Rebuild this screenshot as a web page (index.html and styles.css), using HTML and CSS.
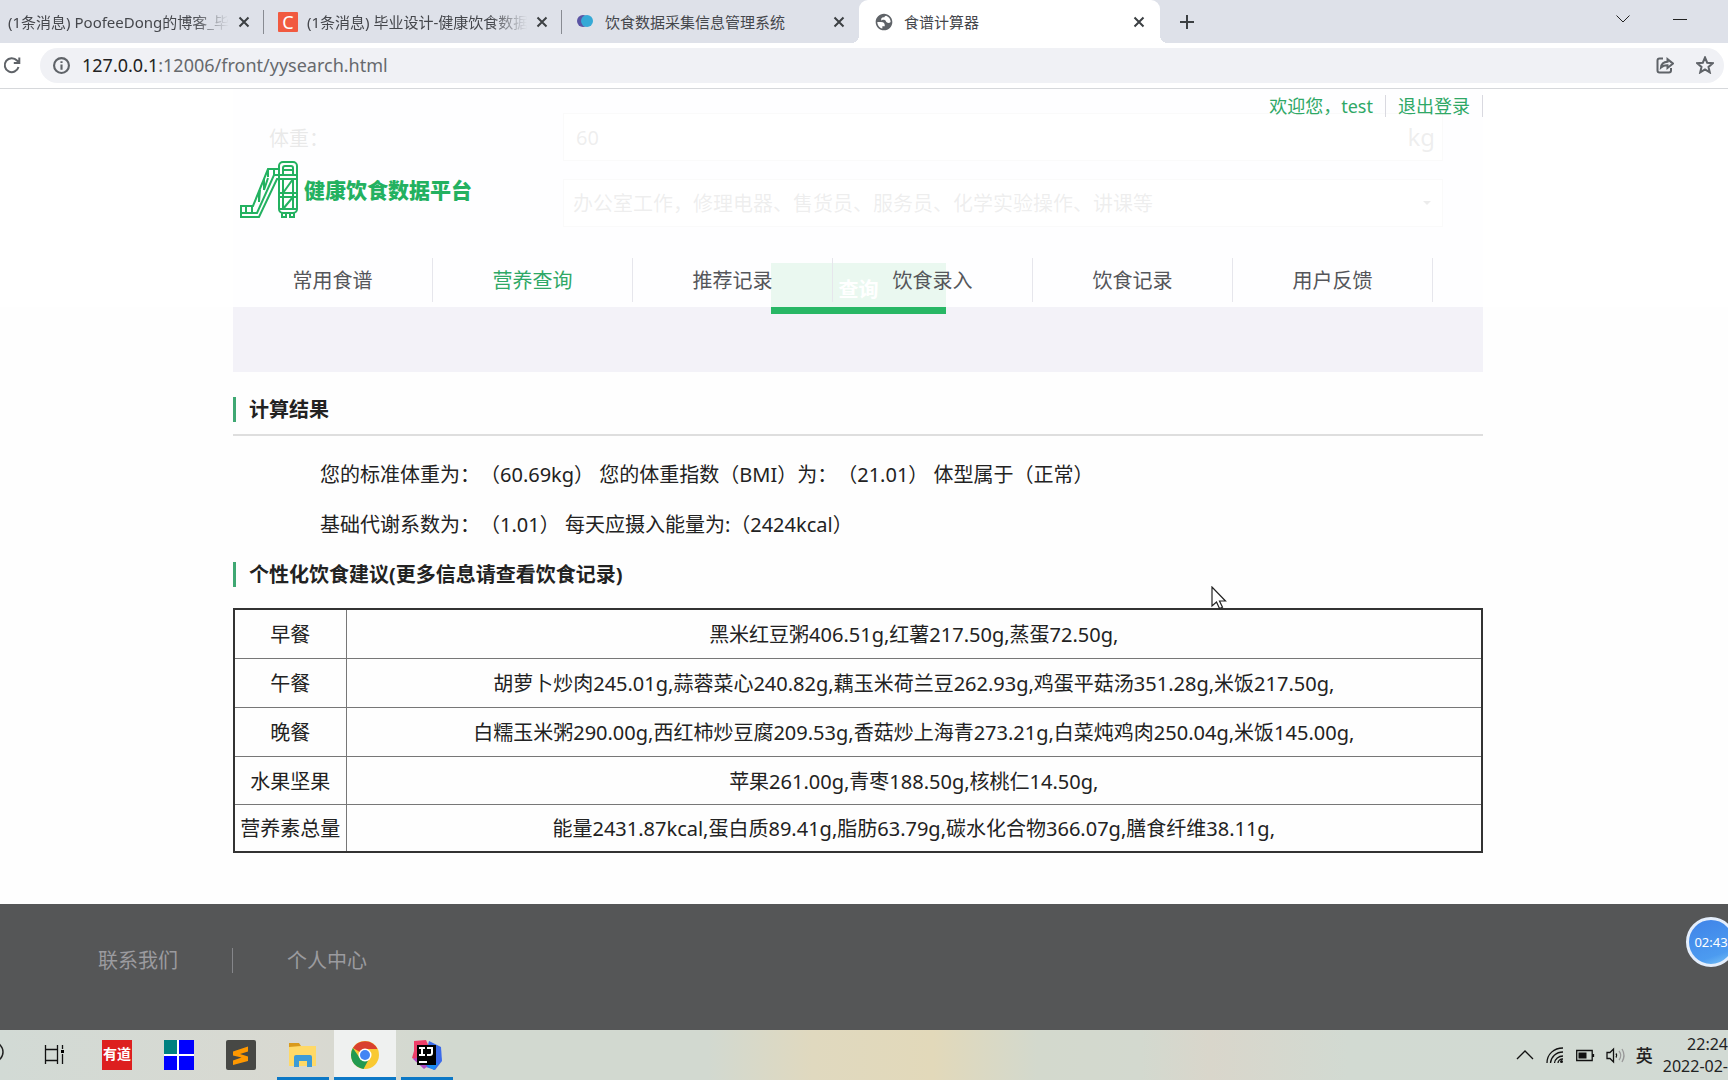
FILE: index.html
```html
<!DOCTYPE html>
<html lang="zh-CN">
<head>
<meta charset="utf-8">
<title>食谱计算器</title>
<link rel="stylesheet" href="styles.css">
</head>
<body>
<div class="tabs">
  <div class="tab tab-first"><span class="tab-title fade">(1条消息) PoofeeDong的博客_毕</span><button class="close" aria-label="关闭"><svg viewBox="0 0 12 12"><path d="M1.5 1.5l9 9M10.5 1.5l-9 9"/></svg></button></div>
  <div class="tab"><span class="fav fav-c">C</span><span class="tab-title fade">(1条消息) 毕业设计-健康饮食数据</span><button class="close" aria-label="关闭"><svg viewBox="0 0 12 12"><path d="M1.5 1.5l9 9M10.5 1.5l-9 9"/></svg></button></div>
  <div class="tab tab-third"><svg class="fav" viewBox="0 0 20 20"><circle cx="7" cy="9" r="6" fill="#5a54a4"/><circle cx="11" cy="9" r="6" fill="#35a9d6"/></svg><span class="tab-title">饮食数据采集信息管理系统</span><button class="close" aria-label="关闭"><svg viewBox="0 0 12 12"><path d="M1.5 1.5l9 9M10.5 1.5l-9 9"/></svg></button></div>
  <div class="tab active"><svg class="fav" viewBox="0 0 24 24"><path fill="#5f6368" d="M12 2C6.48 2 2 6.48 2 12s4.48 10 10 10 10-4.480 10-10S17.520 2 12 2zM4 12h4.400c3.400.020 4.900 1.730 4.500 5.100H10v2.650C6.500 19 4 15.800 4 12zm16 0c-1.500 1.500-3.500 1.300-4.800.3-1-.9-.9-2.800-3.100-3.100-1.500-.1-2.600.1-3.200 1.300-1-2.600.3-4.400 3.600-4.100.2-1.200.8-1.800 2-2C17.700 5.400 20 8.400 20 12z"/></svg><span class="tab-title">食谱计算器</span><button class="close" aria-label="关闭"><svg viewBox="0 0 12 12"><path d="M1.5 1.5l9 9M10.5 1.5l-9 9"/></svg></button></div>
  <button class="plus" aria-label="新标签页"><svg viewBox="0 0 14 14"><path d="M7 0v14M0 7h14"/></svg></button>
  <div class="window-buttons">
    <button aria-label="搜索标签页"><svg viewBox="0 0 14 14"><path d="M.5 3.500l6.500 6.500 6.500-6.500"/></svg></button>
    <button aria-label="最小化"><svg viewBox="0 0 14 14"><path d="M0 7.500h14"/></svg></button>
  </div>
</div>
<div class="toolbar">
  <button class="reload" aria-label="重新加载"><svg viewBox="0 0 18 18"><path d="M15.500 11A7 7 0 1 1 14 4.500L16 6.500M16.300 1.500v5.500h-5.500" fill="none" stroke="#5f6368" stroke-width="2"/></svg></button>
  <div class="address">
    <svg class="info" viewBox="0 0 16 16"><circle cx="8" cy="8" r="7" /><path d="M8 7v5M8 4v1.700"/></svg>
    <span class="url"><b>127.0.0.1</b>:12006/front/yysearch.html</span>
    <button aria-label="分享"><svg viewBox="0 0 18 18"><path d="M7 2.500H3.500Q1.500 2.500 1.500 4.500v10q0 2 2 2H13q2 0 2-2V12M5 11.500c.4-3.700 2.500-5.500 6.500-5.700V3.200L17 7.600l-5.500 4.400V9.300C8.500 9.200 6.700 10 5 11.500z"/></svg></button>
    <button aria-label="收藏"><svg viewBox="0 0 18 18"><path d="M9 1.500l2.200 5.200 5.600.5-4.300 3.700 1.300 5.500L9 13.500l-4.800 2.900 1.300-5.500-4.300-3.700 5.600-.5z"/></svg></button>
  </div>
</div>

<div class="page">
  <header class="site-header">
    <div class="container">
      <div class="user-bar"><a href="#">欢迎您，test</a><a href="#">退出登录</a></div>
      <a class="logo" href="#">
        <svg viewBox="0 0 58 58"><g fill="none" stroke="#23b160" stroke-width="2"><path d="M39 9h-11L13 46H1v11h18l18-38h2"/><path d="M1 53h16l17-38h5M6 46v7M12 46v7M28 9v8M34 9v6M24 19v11M19 31v11M28 18l-4 12M20 30l-1 12"/><rect x="39" y="2" width="18" height="51" rx="4"/><path d="M43 15V8q0-2 2-2h6q2 0 2 2v7M43 10h10M39 15h18M39 19h18M39 33h18M39 37h18M39 49h18M43 19v30M53 19v30M43 33l10-14M43 49l10-12M42 53v4h4v-4M50 53v4h4v-4"/></g></svg>
        <span>健康饮食数据平台</span>
      </a>
      <nav class="nav">
        <a href="#">常用食谱</a><a href="#" class="current">营养查询</a><a href="#">推荐记录</a><a href="#">饮食录入</a><a href="#">饮食记录</a><a href="#">用户反馈</a>
      </nav>
    </div>
  </header>
  <main class="container">
    <form class="calc">
      <div class="field"><label for="weight">体重：</label><div class="control"><input id="weight" type="text" value="60"><span class="unit">kg</span></div></div>
      <div class="field"><label for="work" aria-label="劳动强度"></label><div class="control"><select id="work"><option>办公室工作，修理电器、售货员、服务员、化学实验操作、讲课等</option></select><span class="caret"></span></div></div>
      <button class="submit" type="button">查询</button>
    </form>
    <section>
      <h2>计算结果</h2>
      <div class="result">
        <p>您的标准体重为：（60.69kg） 您的体重指数（BMI）为：（21.01） 体型属于（正常）</p>
        <p>基础代谢系数为：（1.01） 每天应摄入能量为:（2424kcal）</p>
      </div>
    </section>
    <section>
      <h2>个性化饮食建议(更多信息请查看饮食记录)</h2>
      <table>
        <tr><th scope="row">早餐</th><td>黑米红豆粥406.51g,红薯217.50g,蒸蛋72.50g,</td></tr>
        <tr><th scope="row">午餐</th><td>胡萝卜炒肉245.01g,蒜蓉菜心240.82g,藕玉米荷兰豆262.93g,鸡蛋平菇汤351.28g,米饭217.50g,</td></tr>
        <tr><th scope="row">晚餐</th><td>白糯玉米粥290.00g,西红柿炒豆腐209.53g,香菇炒上海青273.21g,白菜炖鸡肉250.04g,米饭145.00g,</td></tr>
        <tr><th scope="row">水果坚果</th><td>苹果261.00g,青枣188.50g,核桃仁14.50g,</td></tr>
        <tr><th scope="row">营养素总量</th><td>能量2431.87kcal,蛋白质89.41g,脂肪63.79g,碳水化合物366.07g,膳食纤维38.11g,</td></tr>
      </table>
    </section>
  </main>
  <svg class="cursor" viewBox="0 0 16 24"><path d="M1 1v19l4.500-4 3 6.500 3-1.300-3-6.200H14.500z" fill="#fff" stroke="#222" stroke-width="1.200"/></svg>
</div>

<footer class="site-footer">
  <a href="#">联系我们</a><a href="#">个人中心</a>
  <div class="recorder">02:43</div>
</footer>

<div class="taskbar">
  <div class="apps">
    <button class="app search" aria-label="搜索"><svg viewBox="0 0 30 30"><circle cx="15" cy="12" r="10" fill="none" stroke="#222" stroke-width="1.500"/></svg></button>
    <button class="app" aria-label="任务视图"><svg viewBox="0 0 30 30"><path d="M5.500 5v4.500h12V5M5.500 24v-3.500h12V24M5.500 9.500h12v11h-12zM22.500 5v4M22.500 14v10" fill="none" stroke="#111" stroke-width="1.300"/><path d="M21 10h3v3h-3z"/></svg></button>
    <button class="app" aria-label="有道"><span class="youdao">有道</span></button>
    <button class="app" aria-label="窗口"><svg viewBox="0 0 30 30"><path fill="#fff" d="M0 0h30v30H0z"/><path fill="#008080" d="M0 0h13v14H0z"/><path fill="#00f" d="M15 0h15v14H15zM0 16h13v14H0zM15 16h15v14H15z"/></svg></button>
    <button class="app" aria-label="编辑器"><svg viewBox="0 0 30 30"><rect width="30" height="30" rx="2" fill="#474845"/><path fill="#ff9800" d="M7 11.500L22 6.500v5l-8 2.500 8 2.500v4.500L7 25v-4.500l8.500-3L7 15.500z"/></svg></button>
    <button class="app open" aria-label="文件"><svg viewBox="0 0 30 30"><path fill="#d99a1c" d="M1 3h10l2 3v3H1z"/><path fill="#ffd967" d="M1 7l12-1h15v20H1z"/><path fill="#3d9bd8" d="M6 27V17q0-2 2-2h14q2 0 2 2v10h-5v-6h-8v6z"/></svg></button>
    <button class="app open focus" aria-label="浏览器"><svg viewBox="0 0 30 30"><circle cx="15" cy="15" r="14" fill="#f9c932"/><path fill="#d9402f" d="M15 15L2.900 8A14 14 0 0 1 27.500 9H15z"/><path fill="#229a50" d="M2.900 8A14 14 0 0 0 13.500 29l6-11L9.800 18z"/><circle cx="15" cy="15" r="6.500" fill="#fff"/><circle cx="15" cy="15" r="5" fill="#4285f4"/></svg></button>
    <button class="app open" aria-label="IntelliJ"><svg viewBox="0 0 30 30"><path fill="#ee3f69" d="M2 1l12-1 6 14-12 8-8-4 2-7z"/><path fill="#3b6bea" d="M17 1l12 6 1 14-7 9-12-4z"/><path fill="#b14cc4" d="M1 19l8-3 7 10-4 3z"/><path fill="#1c8bf0" d="M10 23h16l-4 7z"/><path d="M5 5h19v20H5z"/><path d="M7 8h6M10 8v7M7 15h6M15 8h5v5q0 2-2 2h-3" stroke="#fff" stroke-width="2" fill="none"/><path fill="#fff" d="M7 21h8v2H7z"/></svg></button>
  </div>
  <div class="tray">
    <svg viewBox="0 0 18 18"><path d="M1 13l8-8 8 8"/></svg>
    <svg viewBox="0 0 18 18"><path d="M1 17C1 8 8 2 17 2M4.500 17C5 11 10 6 17 6M8.500 17c.5-4 4-7 8.500-7M12 17c0-2 2-4 5-4"/><circle cx="15.500" cy="15.500" r="1.500" fill="#111" stroke="none"/></svg>
    <svg viewBox="0 0 18 18"><path d="M.7 4.500h15.500v10H.7zM17.500 8v3"/><path fill="#111" stroke="none" d="M2.500 6.500h8v6h-8z"/></svg>
    <svg viewBox="0 0 18 18"><path d="M1 6.500h3L7.500 3v13L4 12.500H1zM10 7.500q1.500 2 0 4"/><path stroke="#999" d="M13 5q3.500 4.500 0 9M16 3q4 6.500 0 13"/></svg>
    <span class="ime">英</span>
    <div class="clock">22:24<br>2022-02-</div>
  </div>
</div>
</body>
</html>
```
FILE: styles.css
```css
* { box-sizing: border-box; }
body {
  margin: 0;
  min-height: 100vh;
  display: flex;
  flex-direction: column;
  overflow-x: hidden;
  background: #fff;
  color: #222;
  font-family: "Noto Sans", "Noto Sans CJK SC", sans-serif;
  font-size: 20px;
  text-spacing-trim: space-all;
}
button { border: 0; padding: 0; background: none; font: inherit; display: block; }
a { color: inherit; text-decoration: none; }
svg { display: block; }

/* browser chrome */
.tabs { display: flex; align-items: stretch; height: 43px; background: #dee1e9; font-size: 15px; color: #45474c; }
.tab { display: flex; align-items: center; position: relative; width: 298px; padding: 0 14px; gap: 9px; }
.tab:nth-child(-n+2)::after { content: ""; position: absolute; right: 0; top: 10px; width: 1px; height: 24px; background: #888b92; }
.tab-first { width: 264px; padding-left: 8px; }
.tab-third { width: 297px; }
.tab-title { flex: 1; overflow: hidden; white-space: nowrap; }
.fade { -webkit-mask-image: linear-gradient(to left, transparent, #000 36px); mask-image: linear-gradient(to left, transparent, #000 36px); }
.fav { flex: none; width: 20px; height: 20px; }
.fav-c { background: #f15a40; color: #fff; font-size: 18px; line-height: 20px; text-align: center; border-radius: 1px; }
.close svg { width: 12px; height: 12px; stroke: #3c4043; stroke-width: 2; }
.active { width: 301px; gap: 10px; padding: 0 15px; background: #fff; border-radius: 9px 9px 0 0; }
.active::before, .active::after { content: ""; position: absolute; bottom: 0; width: 8px; height: 8px; }
.active::before { left: -8px; background: radial-gradient(circle at 0 0, transparent 8px, #fff 8px); }
.active::after { right: -8px; background: radial-gradient(circle at 100% 0, transparent 8px, #fff 8px); }
.plus { margin-left: 20px; }
.plus svg { width: 14px; height: 14px; stroke: #3c4043; stroke-width: 2; }
.window-buttons { margin-left: auto; display: flex; align-items: center; gap: 43px; padding: 0 41px 6px 0; }
.window-buttons svg { width: 14px; height: 14px; fill: none; stroke: #222; }
.toolbar { display: flex; align-items: center; gap: 19px; height: 46px; padding: 0 4px 1px 3px; border-bottom: 1px solid #d6d8db; }
.reload svg { width: 18px; height: 18px; }
.address { flex: 1; display: flex; align-items: center; gap: 22px; height: 35px; padding: 0 10px 0 13px; border-radius: 18px; background: #f0f1f5; }
.address svg { width: 18px; height: 18px; fill: none; stroke: #5f6368; stroke-width: 2; }
.address .info { width: 17px; height: 17px; margin-right: -10px; }
.url { flex: 1; font-size: 18px; line-height: 24px; color: #66696d; }
.url b { font-weight: 400; color: #222; }

/* page */
.page { position: relative; flex: 1; padding: 0 12px 50px 0; background: #fefefe; }
.container { width: 1250px; max-width: 100%; margin: 0 auto; }
.site-header { position: absolute; inset: 0 0 auto 0; z-index: 2; padding-right: 12px; background: rgba(255, 255, 255, .9); }
.user-bar { display: flex; justify-content: flex-end; padding-top: 6px; font-size: 18px; line-height: 22px; color: #2fa866; }
.user-bar a { padding: 0 12px; border-right: 1px solid #d9d9e0; }
.logo { display: flex; align-items: center; gap: 6px; height: 141px; padding: 36px 0 34px 7px; color: #23b160; font-size: 21px; font-weight: 900; }
.logo svg { width: 58px; height: 58px; }
.nav { display: flex; height: 49px; }
.nav a { width: 200px; height: 44px; line-height: 46px; text-align: center; border-right: 1px solid #e6e6ec; color: #55565a; }
.nav .current { color: #2fa866; }
.calc { display: flex; flex-direction: column; gap: 18px; height: 283px; padding: 24px 40px 0 36px; background: #f3f2f8; }
.field { display: grid; grid-template-columns: 294px 1fr; align-items: center; }
.control { position: relative; height: 48px; }
.control input, .control select { width: 100%; height: 48px; padding: 0 12px; border: 1px solid #ccc; background: #fff; color: #555; font: inherit; appearance: none; }
.control select { padding: 0 9px; }
.unit { position: absolute; right: 8px; top: 8px; font-size: 24px; line-height: 32px; color: #555; }
.caret { position: absolute; right: 12px; top: 22px; border: 4px solid transparent; border-top-color: #444; }
.submit { width: 175px; height: 51px; margin: 18px 0 0 502px; background: #28b765; color: #fff; font-weight: 700; }
h2 { display: flex; align-items: center; margin: 0; height: 25px; padding-left: 13px; border-left: 3px solid #3fa873; font-size: 20px; line-height: 25px; }
main section:first-of-type { padding-top: 25px; }
.result { margin-top: 12px; padding: 14px 0 12px 87px; border-top: 2px solid #dedede; line-height: 50px; }
.result p { margin: 0; }
table { width: 100%; margin-top: 21px; border-collapse: collapse; border: 2px solid #333; }
th, td { height: 49px; padding: 0; border: 1px solid #777; text-align: center; font-weight: 400; }
tr:nth-child(n+4) > * { height: 48px; }
th { width: 112px; white-space: nowrap; }
.cursor { position: absolute; left: 1211px; top: 497px; width: 16px; height: 24px; }

.site-footer { position: relative; display: flex; align-items: center; height: 126px; padding: 0 0 14px 98px; background: #555657; color: #9b9b9f; }
.site-footer a { line-height: 25px; padding-right: 54px; }
.site-footer a + a { padding-left: 54px; border-left: 1px solid #85868a; }
.recorder { position: absolute; right: -8px; top: 13px; width: 50px; height: 50px; border: 3px solid #e4eefc; border-radius: 50%; background: linear-gradient(160deg, #3f83e8, #4c9bf0 75%, #7cc5f5); color: #fff; font-size: 13px; line-height: 44px; text-align: center; }

.taskbar { display: flex; justify-content: space-between; height: 50px; background: linear-gradient(90deg, #d2dad5, #d9d9d1 18%, #d2d9d0 26%, #d2d9d0 41%, #e0d9bf 47%, #e2d9ba 54%, #d3d9cd 60%, #d3d9cf 66%, #d9d6cb 70%, #d2dad2 78%, #d2dad4); }
.apps { display: flex; gap: 6px; padding-left: 27px; }
.app { display: flex; align-items: center; justify-content: center; width: 56px; height: 50px; }
.app svg, .youdao { width: 30px; height: 30px; }
.search { margin-left: -62px; }
.youdao { background: #dd1f1f; color: #fff; font-size: 14px; font-weight: 700; line-height: 28px; }
.open { width: 52px; margin: 0 2px; padding-top: 3px; border-bottom: 3px solid #0c78c6; }
.focus { width: 62px; margin: 0 -3px; background: #eff1f0; }
.tray { display: flex; align-items: center; gap: 12px; padding-bottom: 1px; }
.tray svg { width: 18px; height: 18px; fill: none; stroke: #111; stroke-width: 1.3; overflow: visible; }
.ime { font-size: 17px; font-weight: 500; }
.clock { margin-left: -2px; font-size: 16px; line-height: 22px; text-align: right; }
```
